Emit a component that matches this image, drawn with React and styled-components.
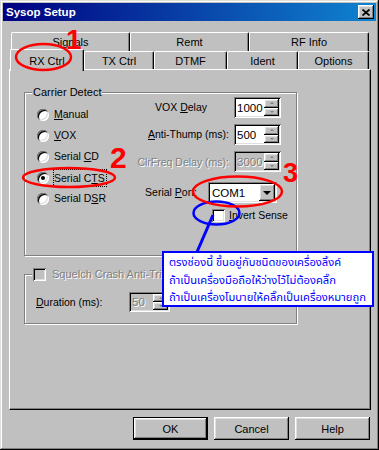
import React from "react";
import styled, { createGlobalStyle, css } from "styled-components";

const GlobalStyle = createGlobalStyle`
  html, body { margin: 0; padding: 0; background: #c0c0c0; }
  body { font-family: "Liberation Sans", Arial, sans-serif; font-size: 10.5px; color: #000; }
  * { box-sizing: border-box; }
`;

const raised = css`
  box-shadow: inset -1px -1px #000, inset 1px 1px #fff, inset -2px -2px #808080, inset 2px 2px #dfdfdf;
`;
const sunken = css`
  box-shadow: inset 1px 1px #808080, inset -1px -1px #fff, inset 2px 2px #000, inset -2px -2px #dfdfdf;
`;

const Window = styled.div`
  position: relative;
  width: 379px;
  height: 450px;
  background: #c0c0c0;
  padding: 3px;
  overflow: hidden;
  box-shadow: inset -1px -1px #000, inset 1px 1px #dfdfdf, inset -2px -2px #808080, inset 2px 2px #fff;
`;

const TitleBar = styled.div`
  height: 18px;
  display: flex;
  align-items: center;
  justify-content: space-between;
  padding: 0 2px 0 3px;
  background: linear-gradient(to right, #000080, #1084d0);
`;

const Title = styled.span`
  color: #fff;
  font-weight: bold;
  font-size: 11.5px;
`;

const CloseButton = styled.div`
  width: 16px;
  height: 14px;
  background: #c0c0c0;
  display: flex;
  align-items: center;
  justify-content: center;
  ${raised}
`;

const Body = styled.div`
  padding: 11px 5px 0 6px;
`;

const TabRow = styled.div`
  display: flex;
  align-items: flex-start;
  height: ${(p) => p.$h}px;
  padding-left: ${(p) => p.$indent}px;
`;

const Tab = styled.div`
  width: ${(p) => p.$w}px;
  height: 100%;
  display: flex;
  align-items: center;
  justify-content: center;
  font-size: 11px;
  background: #c0c0c0;
  border-top: 1px solid #fff;
  border-left: 1px solid #fff;
  border-right: 1px solid #000;
  border-radius: 2px 2px 0 0;
  box-shadow: inset -1px 0 #808080;
  ${(p) =>
    p.$active &&
    css`
      position: relative;
      z-index: 2;
      height: 22px;
      margin-top: -2px;
    `}
`;

const Panel = styled.div`
  width: 362px;
  height: 341px;
  border-top: 1px solid #fff;
  border-left: 1px solid #fff;
  border-right: 1px solid #000;
  border-bottom: 1px solid #000;
  box-shadow: inset -1px -1px #808080;
  padding: 22px 0 0 14px;
`;

const Group = styled.div`
  position: relative;
  width: 273px;
  height: ${(p) => p.$h}px;
  margin-top: ${(p) => p.$mt || 0}px;
  border: 1px solid #808080;
  box-shadow: inset 1px 1px #fff, 1px 1px #fff;
`;

const Legend = styled.div`
  position: absolute;
  top: -7px;
  left: ${(p) => p.$left}px;
  padding: 0 1px;
  line-height: 13px;
  font-size: 11px;
  background: #c0c0c0;
  display: flex;
  align-items: center;
  gap: 6px;
`;

const CarrierBody = styled.div`
  display: flex;
  justify-content: space-between;
  padding: 0 15px 0 12px;
`;

const RadioList = styled.div`
  display: flex;
  flex-direction: column;
  padding-top: 11px;
`;

const RadioRow = styled.div`
  display: flex;
  align-items: center;
  gap: 5px;
  height: 21px;
`;

const Radio = styled.span`
  position: relative;
  flex: none;
  width: 12px;
  height: 12px;
  border-radius: 50%;
  background: #fff;
  box-shadow: inset 1px 1px #808080, inset -1px -1px #fff, inset 2px 2px #000, inset -2px -2px #dfdfdf;
  ${(p) =>
    p.$checked &&
    css`
      &::after {
        content: "";
        position: absolute;
        left: 4px;
        top: 4px;
        width: 4px;
        height: 4px;
        border-radius: 50%;
        background: #000;
      }
    `}
`;

const Label = styled.span`
  line-height: 15px;
  white-space: nowrap;
  ${(p) =>
    p.$focus &&
    css`
      outline: 1px dotted #000;
      line-height: 16px;
      padding-right: 1px;
    `}
`;

const DisabledText = styled.span`
  color: #808080;
  text-shadow: 1px 1px 0 #fff;
  white-space: nowrap;
`;

const FieldColumn = styled.div`
  width: 150px;
  display: flex;
  flex-direction: column;
  padding-top: 4px;
`;

const FieldRow = styled.div`
  display: flex;
  align-items: center;
  justify-content: ${(p) => (p.$start ? "flex-start" : "flex-end")};
  gap: ${(p) => p.$gap ?? 5}px;
  margin-top: ${(p) => p.$mt || 0}px;
  padding-right: ${(p) => p.$pr || 0}px;
  padding-left: ${(p) => p.$pl || 0}px;
`;

const Spin = styled.div`
  flex: none;
  width: ${(p) => p.$w}px;
  height: ${(p) => p.$h || 21}px;
  display: flex;
  padding: 2px;
  background: ${(p) => (p.$disabled ? "#c0c0c0" : "#fff")};
  ${sunken}
`;

const SpinValue = styled.span`
  flex: 1;
  padding-left: 1px;
  display: flex;
  align-items: center;
  font-size: 11.5px;
  color: ${(p) => (p.$disabled ? "#808080" : "#000")};
  ${(p) => p.$disabled && "text-shadow: 1px 1px 0 #fff;"}
`;

const SpinButtons = styled.div`
  width: 15px;
  display: flex;
  flex-direction: column;
`;

const SpinButton = styled.div`
  flex: 1;
  display: flex;
  align-items: center;
  justify-content: center;
  background: #c0c0c0;
  ${raised}
`;

const Arrow = styled.span`
  width: 0;
  height: 0;
  border-left: ${(p) => p.$s}px solid transparent;
  border-right: ${(p) => p.$s}px solid transparent;
  ${(p) =>
    p.$up
      ? css`border-bottom: ${p.$t}px solid ${p.$c};`
      : css`border-top: ${p.$t}px solid ${p.$c};`}
`;

const Combo = styled.div`
  flex: none;
  width: 69px;
  height: 21px;
  display: flex;
  padding: 2px;
  background: #fff;
  ${sunken}
`;

const ComboValue = styled.span`
  flex: 1;
  padding-left: 2px;
  display: flex;
  align-items: center;
  font-size: 11.5px;
`;

const ComboButton = styled.div`
  width: 16px;
  display: flex;
  align-items: center;
  justify-content: center;
  background: #c0c0c0;
  ${raised}
`;

const Check = styled.span`
  flex: none;
  width: 13px;
  height: 13px;
  background: ${(p) => (p.$disabled ? "#c0c0c0" : "#fff")};
  ${sunken}
`;

const DurationRow = styled.div`
  display: flex;
  align-items: center;
  padding: 17px 0 0 11px;
`;

const DurationLabel = styled.span`
  width: 93px;
  line-height: 15px;
`;

const ButtonRow = styled.div`
  display: flex;
  justify-content: flex-end;
  gap: 6px;
  margin-top: 7px;
  padding-right: 1px;
`;

const Button = styled.div`
  width: 75px;
  height: 23px;
  display: flex;
  align-items: center;
  justify-content: center;
  font-size: 11px;
  background: #c0c0c0;
  ${raised}
  ${(p) =>
    p.$default &&
    css`
      box-shadow: inset 0 0 0 1px #000, inset -2px -2px #000, inset 2px 2px #fff, inset -3px -3px #808080,
        inset 3px 3px #dfdfdf;
    `}
`;

const Note = styled.div`
  position: absolute;
  z-index: 3;
  left: 162px;
  top: 251px;
  width: 212px;
  height: 56px;
  background: #fff;
  border: 2px solid #0000ff;
  padding: 1px 0 0 5px;
  color: #0000ff;
  font-family: "Tahoma", "Noto Sans Thai", "Loma", "Garuda", "Norasi", "DejaVu Sans", sans-serif;
  font-size: 11.2px;
  line-height: 17.5px;
  white-space: nowrap;
  overflow: hidden;
`;

const Overlay = styled.svg`
  position: absolute;
  z-index: 4;
  left: 0;
  top: 0;
  pointer-events: none;
`;

const Marker = styled.span`
  position: absolute;
  z-index: 5;
  left: ${(p) => p.$x}px;
  top: ${(p) => p.$y}px;
  font-family: "Liberation Sans", Arial, sans-serif;
  font-weight: bold;
  font-size: ${(p) => p.$size}px;
  line-height: 1;
  color: #ff0000;
`;

function SpinBox({ value, w, h, disabled }) {
  return (
    <Spin $w={w} $h={h} $disabled={disabled}>
      <SpinValue $disabled={disabled}>{value}</SpinValue>
      <SpinButtons>
        <SpinButton>
          <Arrow $up $s={2} $t={2} $c="#808080" />
        </SpinButton>
        <SpinButton>
          <Arrow $s={2} $t={2} $c="#808080" />
        </SpinButton>
      </SpinButtons>
    </Spin>
  );
}

export default function App() {
  return (
    <>
      <GlobalStyle />
      <Window>
        <TitleBar>
          <Title>Sysop Setup</Title>
          <CloseButton>
            <svg width="8" height="7" viewBox="0 0 8 7">
              <path d="M0.5 0.5 L7.5 6.5 M7.5 0.5 L0.5 6.5" stroke="#000" strokeWidth="1.7" />
            </svg>
          </CloseButton>
        </TitleBar>
        <Body>
          <TabRow $h={19} $indent={2}>
            <Tab $w={119}>Signals</Tab>
            <Tab $w={119}>Remt</Tab>
            <Tab $w={120}>RF Info</Tab>
          </TabRow>
          <TabRow $h={18} $indent={1}>
            <Tab $w={74} $active>RX Ctrl</Tab>
            <Tab $w={70}>TX Ctrl</Tab>
            <Tab $w={73}>DTMF</Tab>
            <Tab $w={71}>Ident</Tab>
            <Tab $w={71}>Options</Tab>
          </TabRow>
          <Panel>
            <Group $h={164}>
              <Legend $left={7}>Carrier Detect</Legend>
              <CarrierBody>
                <RadioList>
                  <RadioRow>
                    <Radio />
                    <Label><u>M</u>anual</Label>
                  </RadioRow>
                  <RadioRow>
                    <Radio />
                    <Label><u>V</u>OX</Label>
                  </RadioRow>
                  <RadioRow>
                    <Radio />
                    <Label>Serial <u>C</u>D</Label>
                  </RadioRow>
                  <RadioRow>
                    <Radio $checked />
                    <Label $focus>Serial C<u>T</u>S</Label>
                  </RadioRow>
                  <RadioRow>
                    <Radio />
                    <Label>Serial D<u>S</u>R</Label>
                  </RadioRow>
                </RadioList>
                <FieldColumn>
                  <FieldRow $gap={27}>
                    <Label>VOX <u>D</u>elay</Label>
                    <SpinBox value="1000" w={47} />
                  </FieldRow>
                  <FieldRow $mt={6}>
                    <Label><u>A</u>nti-Thump (ms):</Label>
                    <SpinBox value="500" w={47} />
                  </FieldRow>
                  <FieldRow $mt={6}>
                    <DisabledText>ClrFreq Delay (ms):</DisabledText>
                    <SpinBox value="3000" w={47} disabled />
                  </FieldRow>
                  <FieldRow $mt={10} $pr={4} $gap={11}>
                    <Label>Serial <u>P</u>ort:</Label>
                    <Combo>
                      <ComboValue>COM1</ComboValue>
                      <ComboButton>
                        <Arrow $s={4} $t={4} $c="#000" />
                      </ComboButton>
                    </Combo>
                  </FieldRow>
                  <FieldRow $mt={5} $start $pl={81} $gap={4}>
                    <Check />
                    <Label><u>I</u>nvert Sense</Label>
                  </FieldRow>
                </FieldColumn>
              </CarrierBody>
            </Group>
            <Group $h={50} $mt={18}>
              <Legend $left={7}>
                <Check $disabled />
                <DisabledText>Squelch Crash Anti-Trip</DisabledText>
              </Legend>
              <DurationRow>
                <DurationLabel><u>D</u>uration (ms):</DurationLabel>
                <SpinBox value="50" w={41} h={20} disabled />
              </DurationRow>
            </Group>
          </Panel>
          <ButtonRow>
            <Button $default>OK</Button>
            <Button>Cancel</Button>
            <Button>Help</Button>
          </ButtonRow>
        </Body>

        <Note>
          <div>ตรงช่องนี้ ขึ้นอยู่กับชนิดของเครื่องลิ้งค์</div>
          <div>ถ้าเป็นเครื่องมือถือให้ว่างไว้ไม่ต้องคลิ๊ก</div>
          <div>ถ้าเป็นเครื่องโมบายให้คลิ๊กเป็นเครื่องหมายถูก</div>
        </Note>

        <Overlay width="379" height="450" viewBox="0 0 379 450">
          <ellipse cx="43.5" cy="57" rx="27.5" ry="13" fill="none" stroke="#ff0000" strokeWidth="2.5" />
          <ellipse cx="69" cy="177.5" rx="46" ry="9.5" fill="none" stroke="#ff0000" strokeWidth="2.5" />
          <ellipse cx="216.5" cy="213" rx="23" ry="11.5" fill="none" stroke="#0000ff" strokeWidth="2.5" />
          <line x1="213" y1="215" x2="197" y2="252" stroke="#0000ff" strokeWidth="3" />
          <ellipse cx="237.5" cy="191.5" rx="44.5" ry="15" fill="none" stroke="#ff0000" strokeWidth="2.5" />
        </Overlay>
        <Marker $x={66} $y={26} $size={28}>1</Marker>
        <Marker $x={110} $y={143} $size={30}>2</Marker>
        <Marker $x={283} $y={160} $size={27}>3</Marker>
      </Window>
    </>
  );
}
